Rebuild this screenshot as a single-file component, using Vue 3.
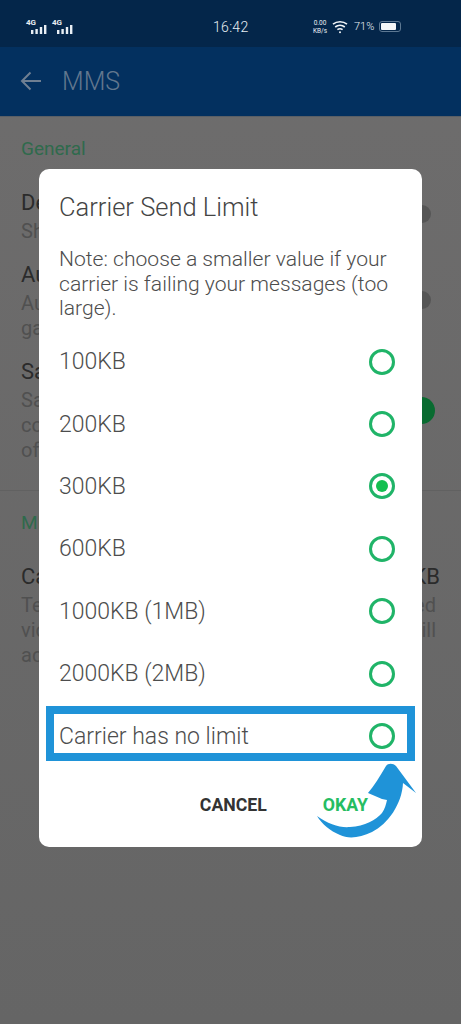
<template>
  <div class="page">
    <!-- status bar -->
    <div class="status-bar">
      <div class="signals">
        <div v-for="n in 2" :key="n" class="signal">
          <span class="signal__label">4G</span>
          <svg width="16" height="9" viewBox="0 0 16 9">
            <rect x="0" y="5" width="2.4" height="4" fill="#e8eef4" />
            <rect x="4.4" y="4" width="2.4" height="5" fill="#e8eef4" />
            <rect x="8.8" y="2" width="2.4" height="7" fill="#e8eef4" />
            <rect x="13" y="0" width="2.4" height="9" fill="#e8eef4" />
          </svg>
        </div>
      </div>
      <div class="clock">16:42</div>
      <div class="status-right">
        <div class="speed"><span>0.00</span><span>KB/s</span></div>
        <svg class="wifi" width="16" height="14" viewBox="0 0 16 14" fill="none" stroke="#f2f5f8" stroke-width="1.6">
          <path d="M1 4.2C5 .9 11 .9 15 4.2" />
          <path d="M3.2 7C6 4.8 10 4.8 12.8 7" />
          <path d="M5.4 9.6C7 8.5 9 8.5 10.6 9.6" />
          <circle cx="8" cy="12.2" r="1" fill="#f2f5f8" stroke="none" />
        </svg>
        <span class="percent">71%</span>
        <div class="battery"><div class="battery__level"></div></div>
      </div>
    </div>

    <!-- app bar -->
    <div class="app-bar">
      <svg width="22" height="20" viewBox="0 0 22 20" fill="none" stroke="#6f7f92" stroke-width="2">
        <path d="M21 10H2M10.500 1.500 2 10l8.500 8.500" />
      </svg>
      <span class="app-bar__title">MMS</span>
    </div>

    <!-- settings under the dim layer -->
    <div class="settings">
      <div class="section-name">General</div>
      <div v-for="row in generalRows" :key="row.title" class="setting" :class="row.cls">
        <div class="setting__text">
          <div class="setting__title">{{ row.title }}</div>
          <div class="setting__desc">{{ row.desc }}</div>
        </div>
        <div class="knob"></div>
      </div>
      <div class="divider"></div>
      <div class="section-name section-name--second">MMS Limits</div>
      <div class="limit-row">
        <span>Carrier Send Limit</span>
        <span>300KB</span>
      </div>
      <div class="setting__desc setting__desc--limit">{{ limitDesc }}</div>
    </div>

    <!-- dialog -->
    <div class="dialog">
      <div class="dialog__title">Carrier Send Limit</div>
      <p class="dialog__note">Note: choose a smaller value if your carrier is failing your messages (too large).</p>
      <div class="options">
        <div v-for="opt in options" :key="opt" class="option">
          <span>{{ opt }}</span>
          <span class="radio" :class="{ 'radio--checked': opt === selected }"></span>
        </div>
      </div>
      <div class="actions">
        <span class="action action--cancel">CANCEL</span>
        <span class="action action--okay">OKAY</span>
      </div>
    </div>

    <!-- annotation drawn on the screenshot -->
    <div class="highlight"></div>
    <svg class="arrow" width="110" height="85" viewBox="0 0 110 85">
      <path fill="#1f93d8" d="M7 62C18 70 30 74 40 73C55 72 66 66 72 59C75 55 76 50 77 46L72 45L58 39C64 32 70 22 76 12C78 9 83 9 86 12L106 39L93 29C92 50 78 70 62 78C50 84 38 85 30 81C20 77 12 70 7 62Z" />
    </svg>
  </div>
</template>

<script setup>
const selected = "300KB"

const options = [
  "100KB",
  "200KB",
  "300KB",
  "600KB",
  "1000KB (1MB)",
  "2000KB (2MB)",
  "Carrier has no limit"
]

const generalRows = [
  { title: "Delivery reports", desc: "Show delivery reports", cls: "setting--one" },
  { title: "Auto download", desc: "Automatically download messages in the\ngallery", cls: "setting--two" },
  { title: "Save attachments", desc: "Save received attachments to your device\ncopies of the files in your conversations\nof the phone", cls: "setting--three" }
]

const limitDesc = "Text messages with pictures and attached\nvideos that are over this limit are shrunk, will\nadd"
</script>

<style>
html,
body {
  margin: 0;
  background: #676767;
}
</style>

<style scoped>
.page {
  position: relative;
  width: 461px;
  height: 1024px;
  overflow: hidden;
  background: linear-gradient(#6e6d6d, #656565);
  font-family: Roboto, "Liberation Sans", sans-serif;
}

.status-bar {
  height: 47px;
  box-sizing: border-box;
  padding: 6px 0 0 26px;
  display: flex;
  align-items: center;
  background: #04264a;
  color: #e8eef4;
}

.signals {
  display: flex;
  gap: 5px;
  width: 187px;
}

.signal {
  position: relative;
  width: 21px;
  height: 14px;
  display: flex;
  align-items: flex-end;
  justify-content: flex-end;
}

.signal__label {
  position: absolute;
  left: 0;
  top: -2px;
  font-size: 8px;
  font-weight: 700;
}

.clock {
  width: 97px;
  font-size: 14px;
  font-weight: 300;
  letter-spacing: .3px;
}

.status-right {
  display: flex;
  align-items: center;
}

.speed {
  width: 20px;
  margin-right: 2px;
  display: flex;
  flex-direction: column;
  align-items: center;
  font-size: 6.500px;
  line-height: 8px;
}

.percent {
  margin-left: 6px;
  font-size: 11px;
  font-weight: 300;
}

.battery {
  width: 22px;
  height: 11px;
  margin-left: 5px;
  box-sizing: border-box;
  padding: 1px;
  border: 1px solid #5d7892;
  border-radius: 3px;
}

.battery__level {
  width: 15px;
  height: 100%;
  background: #f4f6f8;
  border-radius: 1px;
}

.app-bar {
  height: 70px;
  box-sizing: border-box;
  padding: 0 0 1px 20px;
  display: flex;
  align-items: center;
  gap: 20px;
  background: #03305f;
  border-bottom: 1px solid #5a5f66;
}

.app-bar__title {
  font-size: 25px;
  font-weight: 300;
  color: #62778e;
}

.settings {
  color: #2b2b2b;
}

.section-name {
  padding: 19px 0 0 21px;
  font-size: 19px;
  line-height: 26px;
  color: #2f6a4c;
}

.setting {
  display: flex;
  justify-content: space-between;
  padding: 0 30px 0 21px;
  margin-top: 17px;
}

.setting--one {
  margin-top: 27px;
}

.setting__text {
  width: 380px;
}

.setting__title {
  font-size: 22px;
  line-height: 28px;
  white-space: nowrap;
}

.setting__desc {
  margin-top: 2px;
  font-size: 20px;
  line-height: 25px;
  color: #505050;
  white-space: pre-line;
}

.setting__desc--limit {
  padding: 0 25px 0 21px;
  text-align: justify;
  text-align-last: justify;
}

.knob {
  flex: none;
  width: 18px;
  height: 18px;
  border-radius: 50%;
  background: #555;
}

.setting--one .knob {
  margin-top: 16px;
}

.setting--two .knob {
  margin-top: 30px;
}

.setting--three .knob {
  width: 27px;
  height: 27px;
  margin: 39px -4px 0 0;
  background: #086b30;
}

.divider {
  height: 1px;
  margin-top: 27px;
  background: #616161;
}

.limit-row {
  display: flex;
  justify-content: space-between;
  margin-top: 27px;
  padding: 0 21px;
  font-size: 22px;
  line-height: 28px;
}

.dialog {
  position: absolute;
  left: 39px;
  top: 169px;
  width: 383px;
  height: 678px;
  box-sizing: border-box;
  padding: 22px 27px 0 20px;
  background: #fff;
  border-radius: 10px;
  color: #555;
}

.dialog__title {
  font-size: 25.500px;
  font-weight: 300;
  line-height: 32px;
  color: #444;
}

.dialog__note {
  margin: 24px 0 0;
  font-size: 21.100px;
  font-weight: 300;
  line-height: 24.500px;
  color: #4d4d4d;
}

.options {
  margin-top: 10px;
}

.option {
  height: 62.400px;
  display: flex;
  align-items: center;
  justify-content: space-between;
  font-size: 23px;
  font-weight: 300;
  color: #4d4d4d;
}

.radio {
  position: relative;
  width: 26px;
  height: 26px;
  box-sizing: border-box;
  border: 3px solid #20b468;
  border-radius: 50%;
}

.radio--checked::after {
  content: "";
  position: absolute;
  left: 4px;
  top: 4px;
  width: 12px;
  height: 12px;
  border-radius: 50%;
  background: #14bf50;
}

.actions {
  display: flex;
  justify-content: flex-end;
  gap: 56px;
  margin-top: 27px;
  padding-right: 27px;
  font-size: 17.700px;
  font-weight: 700;
  line-height: 22px;
}

.action--cancel {
  color: #333;
}

.action--okay {
  color: #25bd62;
}

.highlight {
  position: absolute;
  left: 46px;
  top: 706px;
  width: 369px;
  height: 55px;
  box-sizing: border-box;
  border: 8px solid #1f93d8;
}

.arrow {
  position: absolute;
  left: 310px;
  top: 754px;
}
</style>
